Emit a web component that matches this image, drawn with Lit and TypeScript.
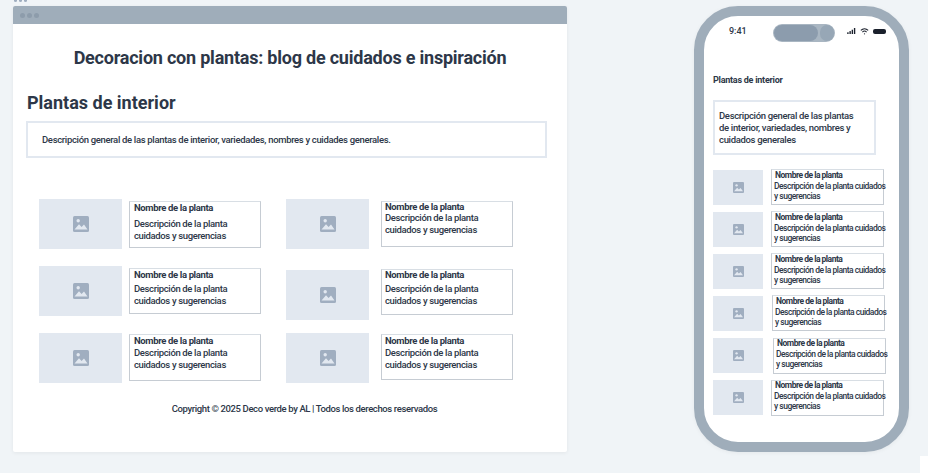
import {LitElement, html, css, svg} from 'lit'
import {customElement} from 'lit/decorators.js'

const imgIcon = svg`<rect width="16" height="16" rx="1.5" fill="#a0aec0"/><circle cx="5.2" cy="4.8" r="1.7" fill="#e2e8f0"/><path d="M1.5 13.5 L6 8.2 L8.6 11 L11 8.6 L14.5 13.5 Z" fill="#e2e8f0"/>`

// measured offsets of each card in the mockup, it's not a regular grid
const desktopRows = [
  {top: 0, boxTop: 2, boxH: 47, nameH: 12, descGap: 4},
  {top: 17, boxTop: 2, boxH: 46, nameH: 12, descGap: 2},
  {top: 17, boxTop: 1, boxH: 47, nameH: 12, descGap: 0},
]
const desktopRowsRight = [
  {top: 0, boxTop: 2, boxH: 46, nameH: 10, descGap: 0},
  {top: 21, boxTop: -1, boxH: 46, nameH: 10, descGap: 3},
  {top: 13, boxTop: 1, boxH: 46, nameH: 12, descGap: 0},
]
const phoneRows = [
  {dx: 0, dy: -1, lift: 0},
  {dx: 0, dy: -1, lift: 0},
  {dx: 0, dy: -1, lift: 0},
  {dx: 1, dy: -1, lift: 0},
  {dx: 2, dy: 0, lift: -1},
  {dx: 0, dy: 0, lift: -1},
]

@customElement('app-root')
export class AppRoot extends LitElement {
  static styles = css`
    :host {
      display: block;
      width: 928px;
      height: 473px;
      background: #f0f4f7;
      overflow: hidden;
      position: relative;
      font-family: 'Roboto', 'Liberation Sans', sans-serif;
      color: #2d3748;
    }
    .page {
      display: flex;
      align-items: flex-start;
      padding: 6px 0 0 13px;
    }
    .dots-top {
      position: absolute;
      left: 14px;
      top: -1px;
      display: flex;
      gap: 2px;
    }
    .dots-top i {
      width: 3px;
      height: 3px;
      background: #a0aec0;
      border-radius: 50%;
    }
    .window {
      width: 554px;
      height: 446px;
      background: #fff;
      border-radius: 2px;
      box-shadow: 0 1px 4px rgba(0, 0, 0, 0.06);
      flex: none;
    }
    .bar {
      height: 18px;
      background: #9fadba;
      border-radius: 2px 2px 0 0;
      display: flex;
      align-items: center;
      gap: 2px;
      padding-left: 7px;
    }
    .bar i {
      width: 5px;
      height: 5px;
      border-radius: 50%;
      background: #8d9cab;
    }
    h1 {
      margin: 0;
      padding-top: 23px;
      text-align: center;
      font-size: 18px;
      line-height: 22px;
      font-weight: 700;
      letter-spacing: -0.22px;
    }
    h2 {
      margin: 0;
      padding: 23px 0 0 14px;
      font-size: 18px;
      line-height: 22px;
      font-weight: 700;
    }
    .intro {
      margin: 7px 0 0 13px;
      width: 521px;
      height: 37px;
      box-sizing: border-box;
      border: 2px solid #e2e8f0;
      padding-left: 14px;
      display: flex;
      align-items: center;
      font-size: 9.5px;
      font-weight: 500;
      letter-spacing: -0.33px;
    }
    .grid {
      display: grid;
      grid-template-columns: 247px 227px;
      padding: 41px 0 0 26px;
    }
    .col {
      display: flex;
      flex-direction: column;
    }
    .item {
      display: flex;
      align-items: flex-start;
    }
    .thumb {
      background: #e2e8f0;
      display: flex;
      align-items: center;
      justify-content: center;
      flex: none;
    }
    .thumb.lg {
      width: 83px;
      height: 50px;
    }
    .thumb.sm {
      width: 50px;
      height: 35px;
    }
    .box {
      box-sizing: border-box;
      background: #fff;
      border: 1px solid #c6ccd3;
      border-top-color: #d8dee4;
      flex: none;
    }
    .box b {
      display: block;
      font-weight: 700;
    }
    .box.lg {
      width: 132px;
      padding-left: 4px;
      font-size: 9.5px;
      font-weight: 500;
      line-height: 12px;
      letter-spacing: -0.36px;
    }
    .box.lg p {
      margin: 0;
      width: 110px;
    }
    .gap-l {
      margin-left: 7px;
    }
    .gap-r {
      margin-left: 12px;
      padding-left: 3px !important;
    }
    .copy {
      text-align: center;
      font-size: 9.5px;
      font-weight: 500;
      padding: 20px 0 0 29px;
      letter-spacing: -0.38px;
    }
    .phone {
      position: absolute;
      left: 694px;
      top: 6px;
      width: 215px;
      height: 446px;
      box-sizing: border-box;
      border: 10px solid #9fadba;
      border-radius: 44px;
      background: #fff;
      padding: 0 9px;
      box-shadow: 0 1px 4px rgba(0, 0, 0, 0.05);
    }
    .status {
      height: 30px;
      display: flex;
      align-items: center;
      justify-content: space-between;
      font-size: 9px;
      font-weight: 500;
      padding: 0 4px 0 16px;
    }
    .island {
      position: absolute;
      left: 69px;
      top: 8px;
      width: 62px;
      height: 18px;
      box-sizing: border-box;
      padding: 1px;
      border-radius: 9px;
      background: #a9b6c2;
      display: flex;
      gap: 2px;
    }
    .island i {
      height: 16px;
      border-radius: 8px;
      background: #8c9cad;
      flex: 1;
    }
    .island i + i {
      flex: none;
      width: 14px;
      background: #97a7b6;
    }
    .sig {
      display: flex;
      align-items: center;
      gap: 4px;
    }
    .phone h3 {
      margin: 0;
      padding-top: 28px;
      font-size: 9px;
      line-height: 12px;
      font-weight: 700;
      letter-spacing: -0.25px;
    }
    .pintro {
      margin-top: 14px;
      width: 163px;
      height: 55px;
      box-sizing: border-box;
      border: 2px solid #e2e8f0;
      padding: 8px 20px 0 4px;
      font-size: 9.5px;
      font-weight: 500;
      line-height: 12px;
      letter-spacing: -0.33px;
    }
    .plist {
      display: flex;
      flex-direction: column;
      gap: 7px;
      padding-top: 15px;
    }
    .pitem {
      display: flex;
      gap: 8px;
      height: 35px;
    }
    .box.sm {
      width: 113px;
      height: 36px;
      font-size: 8.5px;
      font-weight: 500;
      line-height: 10.5px;
      padding: 0 0 0 2px;
      letter-spacing: -0.5px;
    }
    .box.sm b {
      padding-left: 1px;
    }
    .box.sm p {
      margin: 0 -4px 0 0;
    }
    .corner {
      position: absolute;
      right: 0;
      bottom: 0;
      width: 8px;
      height: 17px;
      background: #fff;
    }
  `

  private thumb(size: 'lg' | 'sm') {
    const s = size === 'lg' ? 16 : 11
    return html`<div class="thumb ${size}">
      <svg width=${s} height=${s} viewBox="0 0 16 16">${imgIcon}</svg>
    </div>`
  }

  private column(rows: typeof desktopRows, gapClass: string) {
    return html`<div class="col">
      ${rows.map(
        r => html`<div class="item" style="margin-top:${r.top}px">
          ${this.thumb('lg')}
          <div class="box lg ${gapClass}" style="margin-top:${r.boxTop}px;height:${r.boxH}px">
            <b style="line-height:${r.nameH}px">Nombre de la planta</b>
            <p style="margin-top:${r.descGap}px">Descripción de la planta cuidados y sugerencias</p>
          </div>
        </div>`
      )}
    </div>`
  }

  render() {
    return html`
      <div class="dots-top"><i></i><i></i><i></i></div>
      <div class="page">
        <section class="window">
          <div class="bar"><i></i><i></i><i></i></div>
          <h1>Decoracion con plantas: blog de cuidados e inspiración</h1>
          <h2>Plantas de interior</h2>
          <div class="intro">
            Descripción general de las plantas de interior, variedades, nombres y cuidades generales.
          </div>
          <div class="grid">
            ${this.column(desktopRows, 'gap-l')} ${this.column(desktopRowsRight, 'gap-r')}
          </div>
          <div class="copy">Copyright © 2025 Deco verde by AL | Todos los derechos reservados</div>
        </section>
      </div>
      <section class="phone">
        <div class="status">
          <span>9:41</span>
          <div class="sig">
            <svg width="9" height="6" viewBox="0 0 10 7" fill="#1a202c">
              <rect x="0" y="5" width="1.6" height="2" /><rect x="2.6" y="3.6" width="1.6" height="3.4" /><rect
                x="5.2"
                y="2"
                width="1.6"
                height="5"
              /><rect x="7.8" y="0" width="1.6" height="7" />
            </svg>
            <svg width="9" height="7" viewBox="0 0 10 8" fill="none" stroke="#1a202c" stroke-width="1.2">
              <path d="M0.8 2.8 C3.2 0.4 6.8 0.4 9.2 2.8" />
              <path d="M2.6 4.6 C4 3.3 6 3.3 7.4 4.6" />
              <circle cx="5" cy="6.6" r="0.7" fill="#1a202c" stroke="none" />
            </svg>
            <svg width="13" height="5" viewBox="0 0 13 5"><rect width="13" height="5" rx="2" fill="#1a202c" /></svg>
          </div>
        </div>
        <div class="island"><i></i><i></i></div>
        <h3>Plantas de interior</h3>
        <div class="pintro">Descripción general de las plantas de interior, variedades, nombres y cuidados generales</div>
        <div class="plist">
          ${phoneRows.map(
            r => html`<div class="pitem">
              ${this.thumb('sm')}
              <div class="box sm" style="margin-left:${r.dx}px;margin-top:${r.dy}px">
                <b style="margin-top:${r.lift}px">Nombre de la planta</b>
                <p>Descripción de la planta cuidados y sugerencias</p>
              </div>
            </div>`
          )}
        </div>
      </section>
      <div class="corner"></div>
    `
  }
}
